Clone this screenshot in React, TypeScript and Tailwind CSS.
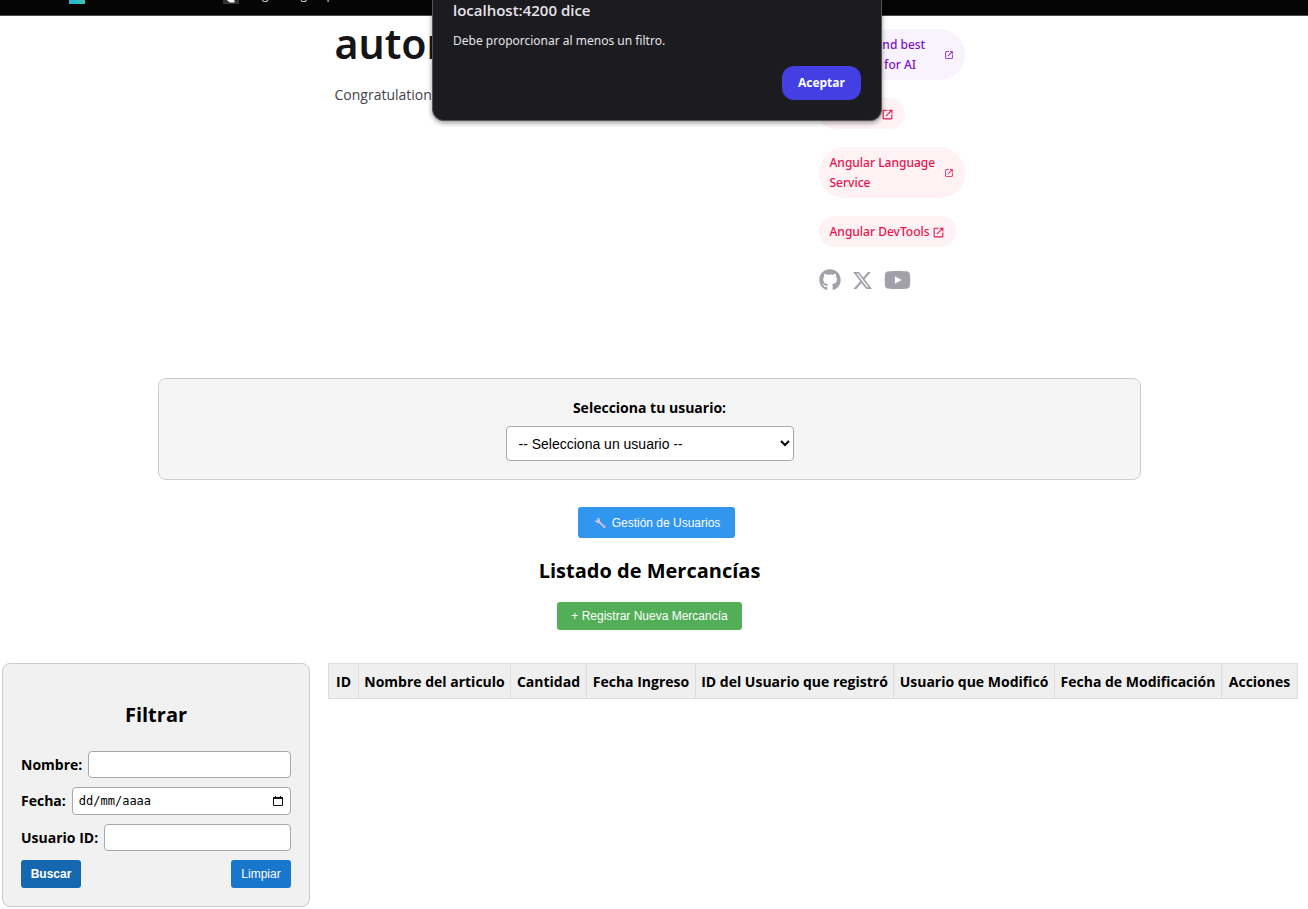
import type { ReactNode } from 'react';
import { FaGithub, FaYoutube } from 'react-icons/fa';

const columns = [
  { label: 'ID', width: 'w-[30px]' },
  { label: 'Nombre del articulo', width: 'w-[152px]' },
  { label: 'Cantidad', width: 'w-[76px]' },
  { label: 'Fecha Ingreso', width: 'w-[109px]' },
  { label: 'ID del Usuario que registró', width: 'w-[198px]' },
  { label: 'Usuario que Modificó', width: 'w-[161px]' },
  { label: 'Fecha de Modificación', width: 'w-[167px]' },
  { label: 'Acciones', width: 'w-[76px]' },
];

function OpenIcon({ className }: { className: string }) {
  return (
    <svg viewBox="0 0 24 24" fill="currentColor" className={className} aria-hidden="true">
      <path d="M5 21q-.825 0-1.412-.587Q3 19.825 3 19V5q0-.825.588-1.413Q4.175 3 5 3h7v2H5v14h14v-7h2v7q0 .825-.587 1.413Q19.825 21 19 21Zm4.7-5.3-1.4-1.4L17.6 5H14V3h7v7h-2V6.4Z" />
    </svg>
  );
}

function Pill({ children, tone, wide }: { children: ReactNode; tone: 'purple' | 'pink'; wide?: boolean }) {
  const color = tone === 'purple' ? 'bg-[#f8f3fe] text-[#7c12c4]' : 'bg-[#fef2f4] text-[#e8124f]';
  return (
    <a
      href="#"
      className={`flex items-center rounded-[26px] px-[11px] pt-[6px] pb-[5px] font-['Noto_Sans',sans-serif] text-[12px] leading-5 font-medium ${color} ${
        wide ? 'w-full justify-between' : 'gap-[2px]'
      }`}
    >
      <span>{children}</span>
      <OpenIcon className={wide ? 'size-[10px] shrink-0' : 'size-[13px] shrink-0'} />
    </a>
  );
}

function BrowserBar() {
  return (
    <header className="flex h-4 items-end overflow-hidden border-b border-[#4c484b] bg-[#050505] pl-[69px]">
      <div className="flex h-[15px] w-full items-start">
        <span className="h-1 w-4 bg-linear-to-r from-[#2bb3dc] to-[#3cc4a8]" />
        <span className="ml-[138px] flex h-1 w-4 justify-center bg-[#333333]">
          <svg viewBox="0 0 10 4" className="h-1 w-[10px]" aria-hidden="true">
            <path d="M1 0h7l1 2q-4 1-6 0Z" fill="#f4f4f4" />
          </svg>
        </span>
        <span className="-mt-[13px] ml-2 text-xs leading-4 text-[#dddddd]">Angular - group</span>
      </div>
    </header>
  );
}

function AlertDialog() {
  return (
    <div
      role="alertdialog"
      aria-labelledby="alert-title"
      aria-describedby="alert-text"
      className="absolute top-0 left-[432px] w-[450px] rounded-b-xl border border-t-0 border-[#55545a] bg-[#1c1b1f] px-5 pb-5 text-[#e6e4ea] shadow-[0_2px_5px_rgba(0,0,0,0.4)]"
    >
      <h2 id="alert-title" className="text-[15px] leading-5 font-semibold">
        localhost:4200 dice
      </h2>
      <p id="alert-text" className="mt-[11px] font-['Noto_Sans',sans-serif] text-[12px] leading-5">
        Debe proporcionar al menos un filtro.
      </p>
      <div className="mt-[15px] flex justify-end">
        <button type="button" className="h-[34px] rounded-xl bg-[#433fe2] px-4 text-[12px] font-bold text-white">
          Aceptar
        </button>
      </div>
    </div>
  );
}

function Welcome() {
  return (
    <section className="mx-auto flex w-full max-w-[630px] justify-between pt-[13px]">
      <div>
        <h1 className="font-['Noto_Sans',sans-serif] text-[41px] leading-[28px] font-semibold text-[#151417]">autom</h1>
        <p className="mt-[28px] text-[14px] leading-5 text-[#45434a]">Congratulations</p>
      </div>
      <div className="flex w-[146px] flex-col items-start gap-[18px]">
        <Pill tone="purple" wide>
          Prompt and best practices for AI
        </Pill>
        <Pill tone="pink">CLI Docs</Pill>
        <Pill tone="pink" wide>
          Angular Language Service
        </Pill>
        <Pill tone="pink">Angular DevTools</Pill>
        <div className="flex items-center gap-[11px] pt-[2px] text-[#a3a0a9]">
          <a href="#" aria-label="Github">
            <FaGithub className="size-[22px]" />
          </a>
          <a href="#" aria-label="X">
            <svg viewBox="0 0 24 24" fill="currentColor" className="size-[21px]" aria-hidden="true">
              <path d="M18.244 1.25h3.308l-7.227 8.26 8.502 11.24H16.17l-5.214-6.817L4.99 20.75H1.68l7.73-8.835L1.254 1.25H8.08l4.713 6.231Zm-1.161 17.52h1.833L7.084 3.126H5.117Z" transform="translate(0 1)" />
            </svg>
          </a>
          <a href="#" aria-label="Youtube">
            <FaYoutube className="h-[26px] w-[27px]" />
          </a>
        </div>
      </div>
    </section>
  );
}

const fieldClass = 'min-w-0 flex-1 rounded border border-[#a8a8a8] bg-white px-[6px]';
const labelClass = 'text-[14px] leading-5 font-bold';

function FilterPanel() {
  return (
    <form
      onSubmit={(event) => event.preventDefault()}
      className="flex w-[308px] shrink-0 flex-col gap-[9px] rounded-lg border border-[#cccccc] bg-[#f1f1f1] p-[18px]"
    >
      <h2 className="mt-[18px] mb-[12px] text-center text-[20px] leading-[30px] font-bold">Filtrar</h2>
      <div className="flex items-center gap-[6px]">
        <label htmlFor="nombre" className={labelClass}>
          Nombre:
        </label>
        <input id="nombre" type="text" className={`h-[27px] ${fieldClass}`} />
      </div>
      <div className="flex items-center gap-[6px]">
        <label htmlFor="fecha" className={labelClass}>
          Fecha:
        </label>
        <div className={`flex h-[28px] items-center ${fieldClass}`}>
          <input
            id="fecha"
            type="text"
            placeholder="dd/mm/aaaa"
            className="min-w-0 flex-1 font-['DejaVu_Sans_Mono',monospace] text-[12px] leading-5 outline-none placeholder:text-black"
          />
          <button type="button" aria-label="Abrir calendario">
            <svg viewBox="0 0 12 12" className="size-3" fill="none" stroke="#111111" aria-hidden="true">
              <path d="M1.5 2.5h9v8h-9ZM3.5 1v1M8.500 1v1" />
              <path d="M1.500 3h9" strokeWidth="2" />
            </svg>
          </button>
        </div>
      </div>
      <div className="flex items-center gap-[6px]">
        <label htmlFor="usuario-id" className={labelClass}>
          Usuario ID:
        </label>
        <input id="usuario-id" type="text" className={`h-[27px] ${fieldClass}`} />
      </div>
      <div className="flex justify-between font-['Liberation_Sans',Arial,sans-serif] text-[12px] text-white">
        <button type="submit" className="h-[28px] w-[60px] rounded-[3px] bg-[#1568b0] font-bold">
          Buscar
        </button>
        <button type="button" className="h-[28px] w-[60px] rounded-[3px] bg-[#1976cd]">
          Limpiar
        </button>
      </div>
    </form>
  );
}

export default function App() {
  return (
    <div className="relative min-h-screen bg-white font-['Open_Sans','Noto_Sans',sans-serif] text-black">
      <BrowserBar />
      <AlertDialog />
      <main className="pr-[11px] pl-[2px]">
        <Welcome />

        <section className="mx-auto mt-[85px] flex w-full max-w-[983px] flex-col items-center rounded-lg border border-[#cccccc] bg-[#f5f5f5] px-[18px] pt-[19px] pb-[18px]">
          <label htmlFor="usuario" className={labelClass}>
            Selecciona tu usuario:
          </label>
          <select
            id="usuario"
            className="mt-2 h-[35px] w-[288px] rounded border border-[#a8a8a8] bg-white px-2 font-['Liberation_Sans',Arial,sans-serif] text-[14px]"
          >
            <option>-- Selecciona un usuario --</option>
          </select>
        </section>

        <section className="flex flex-col items-center pt-[27px]">
          <button
            type="button"
            className="ml-[14px] flex h-[31px] items-center gap-[5px] rounded-[3px] bg-[#3096ee] px-[15px] font-['Liberation_Sans',Arial,sans-serif] text-[12px] text-white"
          >
            <svg viewBox="0 0 14 14" className="size-[14px]" aria-hidden="true">
              <path d="m5.500 5.500 6 5.500" stroke="#d3c3dc" strokeWidth="2.200" strokeLinecap="round" />
              <path d="M3.500 2.200q2.800-.8 3.400 1.500.3 2.600-2.200 3Q2.200 6.900 1.900 4L4 4.900 5 3.800Z" fill="#d9cbe2" />
              <path d="m6 6.700 5 4.700" stroke="#a995bd" strokeWidth=".6" />
            </svg>
            Gestión de Usuarios
          </button>
          <h2 className="mt-[18px] text-[20px] leading-[30px] font-bold">Listado de Mercancías</h2>
          <button
            type="button"
            className="mt-4 h-[28px] rounded-[3px] bg-[#53ae58] px-[14px] font-['Liberation_Sans',Arial,sans-serif] text-[12px] text-white"
          >
            + Registrar Nueva Mercancía
          </button>
        </section>

        <section className="mt-[33px] flex items-start gap-[18px]">
          <FilterPanel />
          <table className="w-full min-w-0 flex-1 table-fixed border-collapse">
            <thead>
              <tr>
                {columns.map((column) => (
                  <th
                    key={column.label}
                    scope="col"
                    className={`h-[35px] border border-[#dddddd] bg-[#efefef] px-0 pt-[2px] pb-0 text-center text-[14px] leading-5 font-bold whitespace-nowrap ${column.width}`}
                  >
                    {column.label}
                  </th>
                ))}
              </tr>
            </thead>
          </table>
        </section>
      </main>
    </div>
  );
}
